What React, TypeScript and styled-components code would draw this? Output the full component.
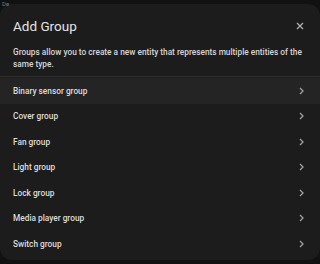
import React from 'react'
import styled, { createGlobalStyle } from 'styled-components'

const Global = createGlobalStyle`
  html, body {
    margin: 0;
    padding: 0;
    background: #111111;
    font-family: Roboto, 'Noto Sans', sans-serif;
  }
  #root {
    width: 320px;
    height: 264px;
    overflow: hidden;
  }
`

const Backdrop = styled.div`
  position: relative;
  width: 320px;
  height: 264px;
  padding-top: 4px;
  box-sizing: border-box;
`

const BehindText = styled.div`
  position: absolute;
  top: 0;
  left: 2px;
  font-size: 6px;
  line-height: 7px;
  color: #7a7a7a;
`

const Dialog = styled.div`
  height: 256px;
  background: #1c1c1c;
  border-radius: 12px;
  display: flex;
  flex-direction: column;
  overflow: hidden;
`

const Header = styled.div`
  display: flex;
  align-items: center;
  justify-content: space-between;
  padding: 12px 12px 0 13px;
  height: 20px;
`

const Title = styled.h2`
  margin: 0;
  font-size: 13.5px;
  font-weight: 400;
  color: #e4e4e4;
`

const CloseButton = styled.button`
  border: 0;
  background: none;
  padding: 0;
  width: 16px;
  height: 16px;
  display: flex;
  align-items: center;
  justify-content: center;
`

const Description = styled.p`
  margin: 10px 13px 0 13px;
  font-size: 8.3px;
  line-height: 12px;
  font-weight: 500;
  color: #d6d6d6;
`

const Divider = styled.div`
  margin-top: 6px;
  height: 1px;
  background: #303030;
`

const List = styled.ul`
  list-style: none;
  margin: 0;
  padding: 1px 0 0 0;
`

const Item = styled.li<{ $active?: boolean }>`
  display: flex;
  align-items: center;
  justify-content: space-between;
  height: 25.5px;
  padding: 0 15px 0 13px;
  background: ${(p) => (p.$active ? '#242424' : 'transparent')};
  font-size: 8.3px;
  font-weight: 500;
  color: #dedede;
`

const Chevron = () => (
  <svg width="7" height="8" viewBox="0 0 7 8">
    <path d="M2 1l3 3-3 3" fill="none" stroke="#a0a0a0" strokeWidth="1.3" />
  </svg>
)

const groups = [
  'Binary sensor group',
  'Cover group',
  'Fan group',
  'Light group',
  'Lock group',
  'Media player group',
  'Switch group',
]

const App = () => {
  return (
    <Backdrop>
      <Global />
      <BehindText>De</BehindText>
      <Dialog>
        <Header>
          <Title>Add Group</Title>
          <CloseButton>
            <svg width="8" height="8" viewBox="0 0 8 8">
              <path d="M1 1l6 6M7 1L1 7" stroke="#b0b0b0" strokeWidth="1.3" />
            </svg>
          </CloseButton>
        </Header>
        <Description>
          Groups allow you to create a new entity that represents multiple entities of the
          same type.
        </Description>
        <Divider />
        <List>
          {groups.map((g, i) => (
            <Item key={g} $active={i === 0}>
              {g}
              <Chevron />
            </Item>
          ))}
        </List>
      </Dialog>
    </Backdrop>
  )
}

export default App
